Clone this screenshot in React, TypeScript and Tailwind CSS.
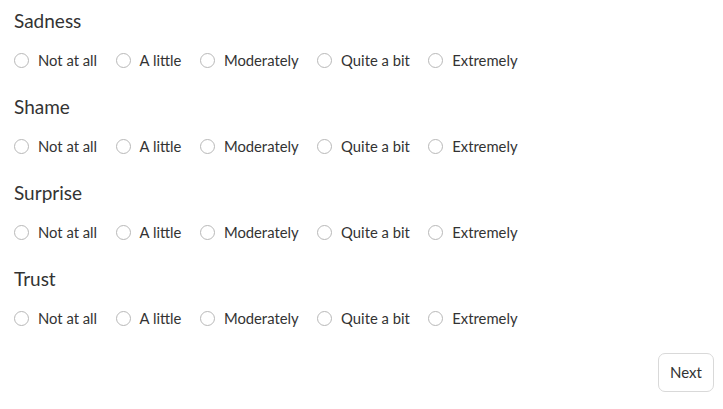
const options = ["Not at all", "A little", "Moderately", "Quite a bit", "Extremely"];
const emotions = ["Sadness", "Shame", "Surprise", "Trust"];

function Question({ label }: { label: string }) {
  return (
    <div className="mb-[25px]">
      <h2 className="text-[19px] leading-[24px] text-[#333] mb-[17px]">{label}</h2>
      <div className="flex items-center gap-[18.5px]">
        {options.map((o) => (
          <label key={o} className="flex items-center gap-[9px] text-[14.8px] leading-[20px] text-[#333]">
            <span className="w-[15px] h-[15px] rounded-full border border-[#b8b8b8] bg-white" />
            {o}
          </label>
        ))}
      </div>
    </div>
  );
}

export default function App() {
  return (
    <div className="w-[723px] h-[409px] bg-white pl-[14px] pr-[9px] pt-[9px] font-['Lato',sans-serif]">
      {emotions.map((e) => (
        <Question key={e} label={e} />
      ))}
      <div className="flex justify-end mt-[15px]">
        <button className="w-[56px] h-[39px] rounded-[7px] border border-[#d9d9d9] text-[15px] text-[#333] bg-white">
          Next
        </button>
      </div>
    </div>
  );
}
